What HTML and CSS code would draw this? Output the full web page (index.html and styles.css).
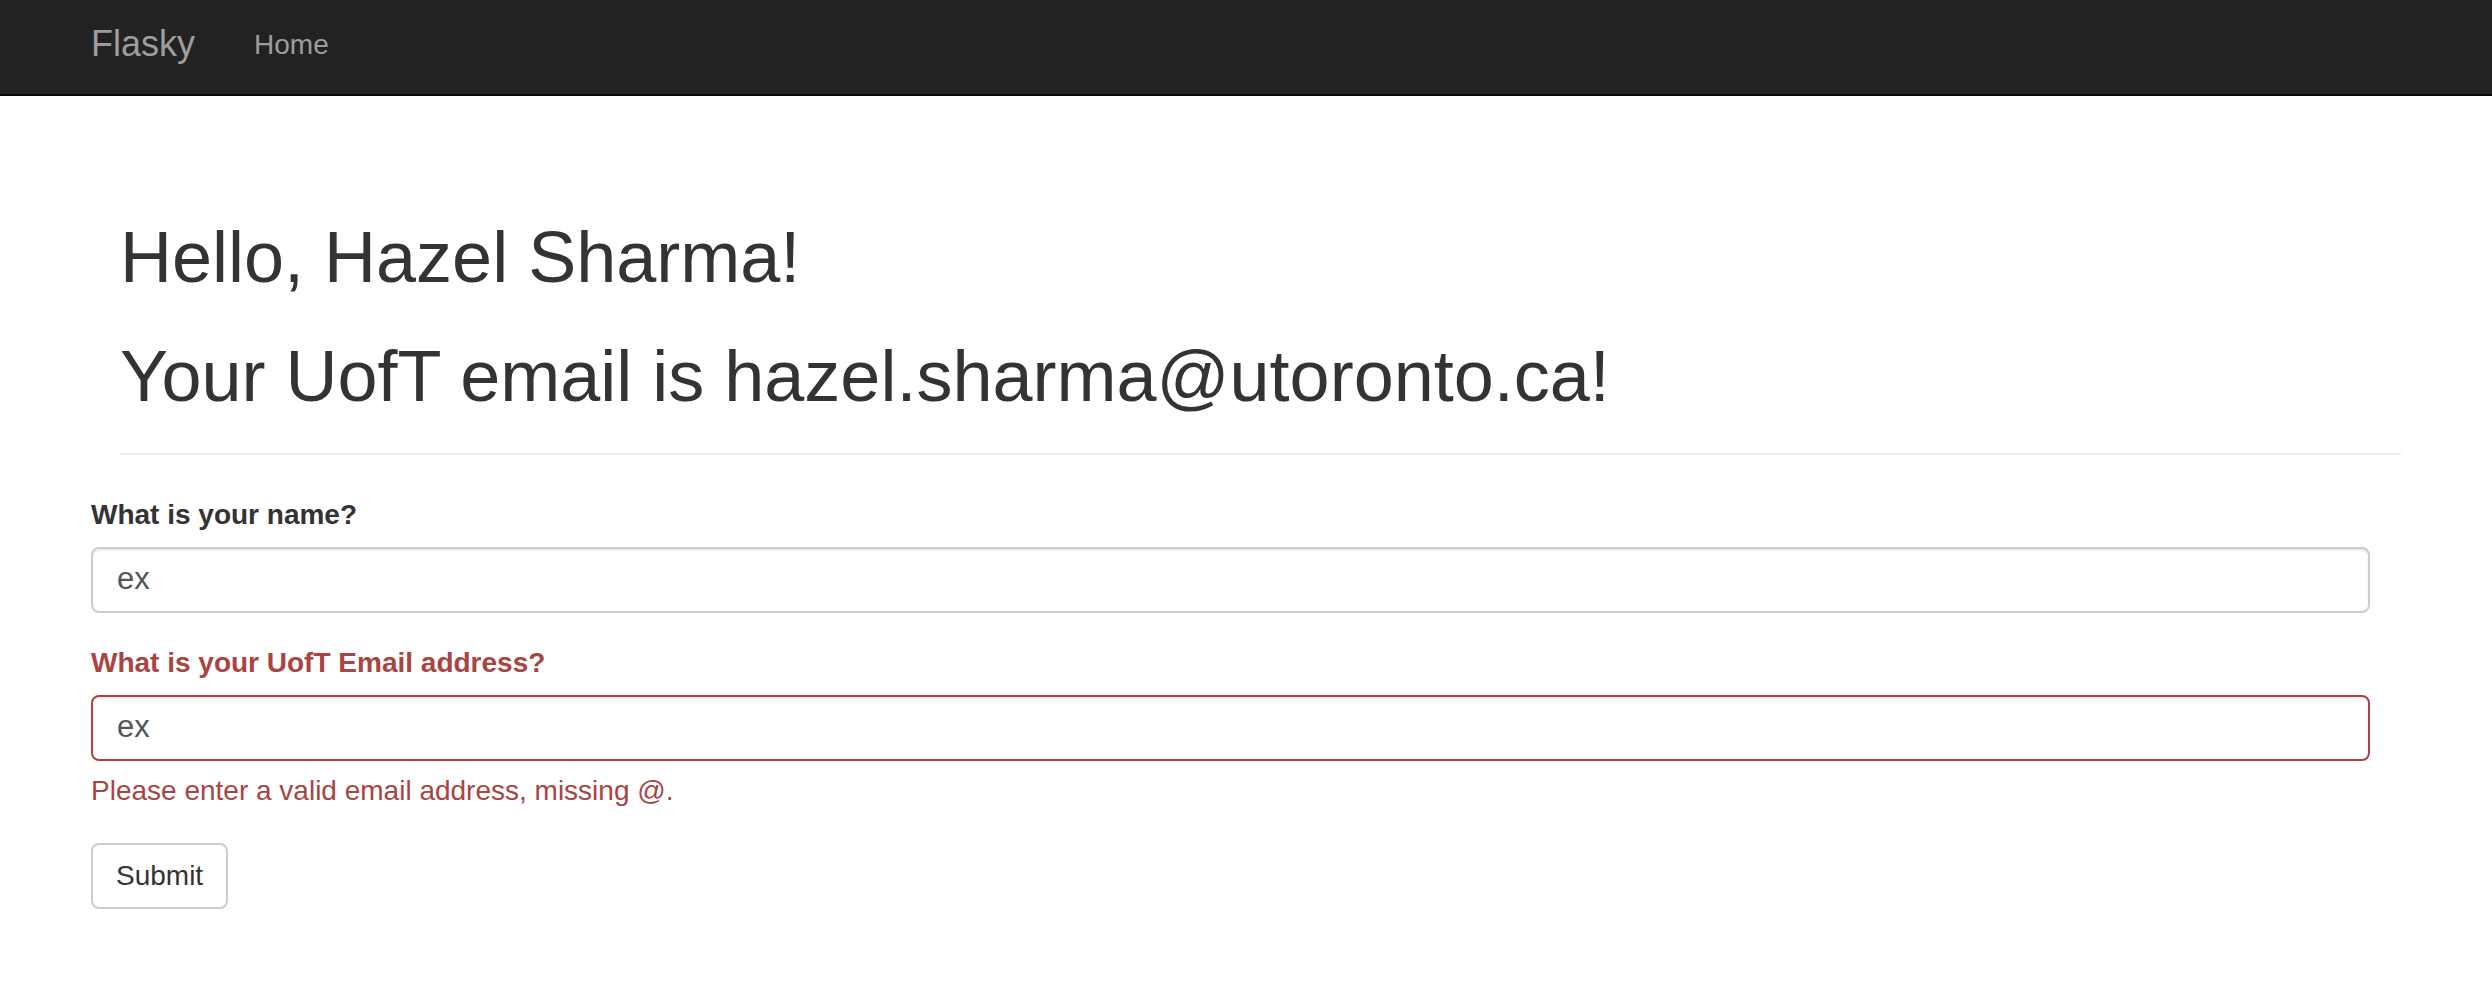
FILE: index.html
```html
<!DOCTYPE html>
<html lang="en">
<head>
<meta charset="utf-8">
<title>Flasky</title>
<link rel="stylesheet" href="styles.css">
</head>
<body>
<nav class="navbar">
  <div class="nav-inner">
    <a class="brand" href="#">Flasky</a>
    <a class="nav-link" href="#">Home</a>
  </div>
</nav>
<main class="container">
  <div class="page-header">
    <h1 class="title">Hello, Hazel Sharma!</h1>
    <h1 class="title">Your UofT email is hazel.sharma@utoronto.ca!</h1>
  </div>
  <form class="form">
    <div class="form-group">
      <label class="control-label" for="name">What is your name?</label>
      <input class="form-control" id="name" type="text" value="ex">
    </div>
    <div class="form-group has-error">
      <label class="control-label" for="email">What is your UofT Email address?</label>
      <input class="form-control" id="email" type="text" value="ex">
      <span class="help-block">Please enter a valid email address, missing @.</span>
    </div>
    <button class="btn" type="button">Submit</button>
  </form>
</main>
</body>
</html>
```
FILE: styles.css
```css
* { box-sizing: border-box; }

body {
  margin: 0;
  background: #fff;
  color: #333;
  font-family: "Liberation Sans", Arial, sans-serif;
}

.navbar {
  height: 96px;
  background: #222;
  border-bottom: 2px solid #080808;
}

.nav-inner {
  display: flex;
  align-items: flex-start;
  padding-left: 91px;
}

.brand {
  display: block;
  padding-top: 24px;
  font-size: 36px;
  line-height: 40px;
  color: #9d9d9d;
  text-decoration: none;
  margin-right: 59px;
}

.nav-link {
  display: block;
  padding-top: 29px;
  font-size: 28px;
  line-height: 32px;
  color: #9d9d9d;
  text-decoration: none;
}

.container {
  padding: 121px 122px 60px 91px;
}

.page-header {
  display: flex;
  flex-direction: column;
  gap: 39px;
  margin: 0 -31px 0 29px;
  padding-bottom: 37px;
  border-bottom: 2px solid #eee;
}

.title {
  margin: 0;
  font-size: 72px;
  line-height: 80px;
  font-weight: 400;
  color: #333;
}

.form {
  display: flex;
  flex-direction: column;
  align-items: flex-start;
  margin-top: 40px;
}

.form-group {
  display: flex;
  flex-direction: column;
  width: 100%;
  margin-bottom: 30px;
}

.form-group.has-error {
  margin-bottom: 32px;
}

.control-label {
  font-size: 28px;
  line-height: 40px;
  font-weight: 700;
  color: #333;
  margin-bottom: 12px;
}

.form-control {
  width: 100%;
  height: 66px;
  padding: 0 24px 2px 24px;
  font-family: "Liberation Sans", Arial, sans-serif;
  font-size: 31px;
  color: #555;
  background: #fff;
  border: 2px solid #ccc;
  border-radius: 8px;
  box-shadow: inset 0 2px 2px rgba(0, 0, 0, 0.075);
  outline: none;
}

.has-error .control-label,
.has-error .help-block {
  color: #a94442;
}

.has-error .form-control {
  border-color: #a94442;
}

.help-block {
  display: block;
  margin-top: 10px;
  font-size: 28px;
  line-height: 40px;
}

.btn {
  height: 66px;
  padding: 0 23px;
  font-family: "Liberation Sans", Arial, sans-serif;
  font-size: 28px;
  color: #333;
  background: #fff;
  border: 2px solid #ccc;
  border-radius: 8px;
  cursor: pointer;
}
```
